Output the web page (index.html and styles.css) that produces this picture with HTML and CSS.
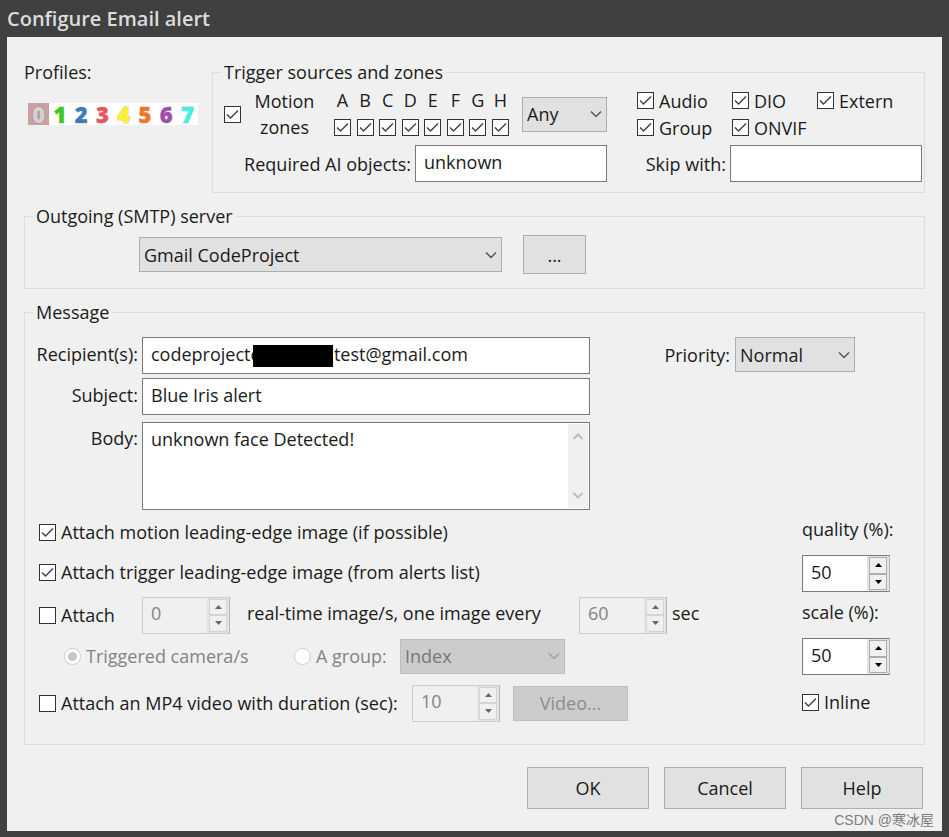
FILE: index.html
```html
<!DOCTYPE html>
<html lang="en">
<head>
    <meta charset="UTF-8">
    <meta name="viewport" content="width=device-width, initial-scale=1.0">
    <title>Configure Email alert</title>
    <link rel="stylesheet" href="styles.css">
</head>
<body>
    <h1 class="title-bar">Configure Email alert</h1>

    <form class="dialog">
        <div class="top">
            <div class="profiles">
                <p>Profiles:</p>
                <div class="profile-list">
                    <button type="button" class="profile p0">0</button>
                    <button type="button" class="profile p1">1</button>
                    <button type="button" class="profile p2">2</button>
                    <button type="button" class="profile p3">3</button>
                    <button type="button" class="profile p4">4</button>
                    <button type="button" class="profile p5">5</button>
                    <button type="button" class="profile p6">6</button>
                    <button type="button" class="profile p7">7</button>
                </div>
            </div>

            <fieldset class="group triggers">
                <legend>Trigger sources and zones</legend>
                <div class="trigger-row">
                    <input type="checkbox" id="motion" checked>
                    <label for="motion" class="motion-label">Motion zones</label>
                    <div class="zones">
                        <label>A<input type="checkbox" checked></label>
                        <label>B<input type="checkbox" checked></label>
                        <label>C<input type="checkbox" checked></label>
                        <label>D<input type="checkbox" checked></label>
                        <label>E<input type="checkbox" checked></label>
                        <label>F<input type="checkbox" checked></label>
                        <label>G<input type="checkbox" checked></label>
                        <label>H<input type="checkbox" checked></label>
                    </div>
                    <select class="zone-mode" aria-label="Zone mode">
                        <option>Any</option>
                    </select>
                    <div class="sources">
                        <label class="check"><input type="checkbox" checked>Audio</label>
                        <label class="check"><input type="checkbox" checked>DIO</label>
                        <label class="check"><input type="checkbox" checked>Extern</label>
                        <label class="check"><input type="checkbox" checked>Group</label>
                        <label class="check"><input type="checkbox" checked>ONVIF</label>
                    </div>
                </div>
                <div class="ai-row">
                    <label for="required" class="required-label">Required AI objects:</label>
                    <input type="text" id="required" value="unknown">
                    <label for="skip" class="skip-label">Skip with:</label>
                    <input type="text" id="skip">
                </div>
            </fieldset>
        </div>

        <fieldset class="group server">
            <legend>Outgoing (SMTP) server</legend>
            <div class="server-row">
                <select class="server-select" aria-label="Server">
                    <option>Gmail CodeProject</option>
                </select>
                <button type="button" class="btn more">...</button>
            </div>
        </fieldset>

        <fieldset class="group message">
            <legend>Message</legend>
            <div class="mail">
                <div class="mail-fields">
                    <label for="recipient">Recipient(s):</label>
                    <div class="recipient">
                        <input type="text" id="recipient" value="codeprojectc&nbsp;&nbsp;&nbsp;&nbsp;&nbsp;&nbsp;&nbsp;&nbsp;&nbsp;&nbsp;&nbsp;&nbsp;&nbsp;&nbsp;&nbsp;&nbsp;test@gmail.com">
                        <span class="redacted"></span>
                    </div>
                    <label for="subject">Subject:</label>
                    <input type="text" id="subject" value="Blue Iris alert">
                    <label for="body" class="body-label">Body:</label>
                    <div class="body-box">
                        <textarea id="body">unknown face Detected!</textarea>
                        <div class="scrollbar">
                            <svg width="12" height="10" viewBox="0 0 12 10"><path d="M1.5 8 6 3.5 10.5 8"/></svg>
                            <svg width="12" height="10" viewBox="0 0 12 10"><path d="M1.5 2 6 6.5 10.5 2"/></svg>
                        </div>
                    </div>
                </div>
                <div class="priority">
                    <label for="priority">Priority:</label>
                    <select id="priority">
                        <option>Normal</option>
                    </select>
                </div>
            </div>

            <div class="attach">
                <div class="attach-options">
                    <div class="line">
                        <label class="check"><input type="checkbox" checked>Attach motion leading-edge image (if possible)</label>
                    </div>
                    <div class="line">
                        <label class="check"><input type="checkbox" checked>Attach trigger leading-edge image (from alerts list)</label>
                    </div>
                    <div class="line realtime">
                        <label class="check attach-count"><input type="checkbox">Attach</label>
                        <div class="spinner disabled">
                            <input type="number" value="0" id="count" disabled>
                            <div class="arrows">
                                <button type="button" disabled aria-label="Up"></button>
                                <button type="button" disabled aria-label="Down"></button>
                            </div>
                        </div>
                        <label for="count" class="every">real-time image/s, one image every</label>
                        <div class="spinner disabled">
                            <input type="number" value="60" id="interval" disabled>
                            <div class="arrows">
                                <button type="button" disabled aria-label="Up"></button>
                                <button type="button" disabled aria-label="Down"></button>
                            </div>
                        </div>
                        <label for="interval" class="sec">sec</label>
                    </div>
                    <div class="line cameras">
                        <label class="check triggered"><input type="radio" name="cameras" checked disabled>Triggered camera/s</label>
                        <label class="check by-group"><input type="radio" name="cameras" disabled>A group:</label>
                        <select class="group-select" aria-label="Group" disabled>
                            <option>Index</option>
                        </select>
                    </div>
                    <div class="line video">
                        <label class="check with-video"><input type="checkbox">Attach an MP4 video with duration (sec):</label>
                        <div class="spinner disabled">
                            <input type="number" value="10" aria-label="Duration" disabled>
                            <div class="arrows">
                                <button type="button" disabled aria-label="Up"></button>
                                <button type="button" disabled aria-label="Down"></button>
                            </div>
                        </div>
                        <button type="button" class="btn video-btn" disabled>Video...</button>
                    </div>
                </div>

                <div class="image-options">
                    <label for="quality">quality (%):</label>
                    <div class="spinner">
                        <input type="number" value="50" id="quality">
                        <div class="arrows">
                            <button type="button" aria-label="Up"></button>
                            <button type="button" aria-label="Down"></button>
                        </div>
                    </div>
                    <label for="scale">scale (%):</label>
                    <div class="spinner">
                        <input type="number" value="50" id="scale">
                        <div class="arrows">
                            <button type="button" aria-label="Up"></button>
                            <button type="button" aria-label="Down"></button>
                        </div>
                    </div>
                    <label class="check inline"><input type="checkbox" checked>Inline</label>
                </div>
            </div>
        </fieldset>

        <div class="actions">
            <button type="button" class="btn">OK</button>
            <button type="button" class="btn">Cancel</button>
            <button type="button" class="btn">Help</button>
        </div>
    </form>

    <span class="watermark">CSDN @寒冰屋</span>
</body>
</html>
```
FILE: styles.css
```css
* {
    margin: 0;
    padding: 0;
    box-sizing: border-box;
}

body {
    position: relative;
    background-color: #404040;
    color: #1a1a1a;
    font-family: 'Open Sans', 'Noto Sans', sans-serif;
    font-size: 18px;
    line-height: 24px;
    padding: 0 7px 6px;
}

input, select, textarea, button {
    font: inherit;
    color: inherit;
    border-radius: 0;
    outline: none;
}

label {
    white-space: nowrap;
}

.title-bar {
    color: #dcdcdc;
    font-size: 20px;
    font-weight: 600;
    line-height: 37px;
}

.dialog {
    background-color: #f0f0f0;
    padding: 23px 17px 22px;
}

/* Group boxes */
.group {
    border: 1px solid #dcdcdc;
    min-width: 0;
    padding: 0 2px 0 8px;
}

.group legend {
    padding: 0 3px;
    line-height: 24px;
}

/* Text boxes */
input[type="text"] {
    background-color: #fff;
    border: 1px solid #7a7a7a;
    display: block;
    height: 37px;
    min-width: 0;
    padding: 0 8px 4px;
    width: 100%;
}

/* Drop-downs */
select {
    appearance: none;
    background: #e1e1e1 url("data:image/svg+xml,%3Csvg xmlns='http://www.w3.org/2000/svg' width='12' height='8'%3E%3Cpath d='M1 1.500 6 6.500 11 1.500' fill='none' stroke='%23555' stroke-width='1.500'/%3E%3C/svg%3E") no-repeat right 4px center;
    border: 1px solid #adadad;
    height: 35px;
    padding: 0 20px 0 4px;
}

select:disabled {
    background-color: #ccc;
    background-image: url("data:image/svg+xml,%3Csvg xmlns='http://www.w3.org/2000/svg' width='12' height='8'%3E%3Cpath d='M1 1.500 6 6.500 11 1.500' fill='none' stroke='%23a0a0a0' stroke-width='1.500'/%3E%3C/svg%3E");
    border-color: #bfbfbf;
    color: #787878;
    opacity: 1;
}

/* Check boxes and radios */
input[type="checkbox"],
input[type="radio"] {
    appearance: none;
    background: #fff no-repeat center;
    border: 1px solid #333;
    flex: none;
    height: 17px;
    width: 17px;
}

input[type="checkbox"]:checked {
    background-image: url("data:image/svg+xml,%3Csvg xmlns='http://www.w3.org/2000/svg' width='15' height='15'%3E%3Cpath d='M2 7.500 5.500 11 13 3.500' fill='none' stroke='%23444' stroke-width='1.500'/%3E%3C/svg%3E");
}

input[type="radio"] {
    border-color: #ccc;
    border-radius: 50%;
}

input[type="radio"]:checked {
    background-image: radial-gradient(circle, #c6c6c6 4px, #fff 5px);
}

.check {
    display: flex;
    align-items: center;
    gap: 5px;
}

/* Buttons */
.btn {
    background-color: #e1e1e1;
    border: 1px solid #adadad;
}

.btn:disabled {
    background-color: #ccc;
    border-color: #bfbfbf;
    color: #8c8c8c;
}

/* Number boxes */
.spinner {
    background-color: #fff;
    border: 1px solid #7a7a7a;
    border-right-color: #b4b4bc;
    display: flex;
    flex: none;
    height: 37px;
    width: 88px;
}

.spinner input {
    appearance: textfield;
    background: none;
    border: none;
    flex: 1;
    min-width: 0;
    padding: 0 0 4px 8px;
}

.spinner input::-webkit-inner-spin-button {
    display: none;
}

.arrows {
    background-color: #e3e3e8;
    display: flex;
    flex-direction: column;
    padding: 1px 2px;
    width: 22px;
}

.arrows button {
    background: #f0f0f0 no-repeat center;
    background-image: url("data:image/svg+xml,%3Csvg xmlns='http://www.w3.org/2000/svg' width='7' height='4'%3E%3Cpath d='M0 4 3.500 0 7 4z'/%3E%3C/svg%3E");
    border: 1px solid #acacac;
    flex: 1;
}

.arrows button + button {
    background-image: url("data:image/svg+xml,%3Csvg xmlns='http://www.w3.org/2000/svg' width='7' height='4'%3E%3Cpath d='M0 0 3.500 4 7 0z'/%3E%3C/svg%3E");
}

.spinner.disabled {
    background-color: #f0f0f0;
    border-color: #ccc;
    border-right-color: #b4b4bc;
    color: #838383;
}

.disabled .arrows button {
    background-image: url("data:image/svg+xml,%3Csvg xmlns='http://www.w3.org/2000/svg' width='7' height='4'%3E%3Cpath d='M0 4 3.500 0 7 4z' fill='%23666'/%3E%3C/svg%3E");
    border-color: #d4d4d4;
}

.disabled .arrows button + button {
    background-image: url("data:image/svg+xml,%3Csvg xmlns='http://www.w3.org/2000/svg' width='7' height='4'%3E%3Cpath d='M0 0 3.500 4 7 0z' fill='%23666'/%3E%3C/svg%3E");
}

/* Profiles */
.top {
    display: flex;
}

.profiles {
    flex: none;
    width: 188px;
}

.profile-list {
    background-color: #fff;
    display: flex;
    height: 22px;
    margin: 19px 14px 0 4px;
}

.profile {
    background: none;
    border: none;
    flex: 1;
    font-family: 'Noto Sans', sans-serif;
    font-size: 22px;
    font-weight: 900;
    line-height: 22px;
    -webkit-text-stroke: 1px rgba(70, 70, 70, 0.3);
    paint-order: stroke fill;
}

.p0 { background-color: #cba0a2; color: #d2d2d2; }
.p1 { color: #3ccb1c; }
.p2 { color: #3a7cbc; }
.p3 { color: #f05058; }
.p4 { color: #fff02c; }
.p5 { color: #f47420; }
.p6 { color: #a04cb0; }
.p7 { color: #3cf4e4; }

/* Trigger sources */
.triggers {
    flex: 1;
    padding-bottom: 10px;
}

.trigger-row {
    display: flex;
    align-items: center;
    padding: 3px 0 4px 3px;
}

.motion-label {
    line-height: 26px;
    margin-right: 6px;
    padding: 0 12px;
    text-align: center;
    white-space: normal;
    width: 87px;
}

.zones {
    display: flex;
    justify-content: space-between;
    padding-bottom: 4px;
    width: 175px;
}

.zones label {
    display: flex;
    flex-direction: column;
    align-items: center;
    gap: 7px;
    width: 17px;
}

.zone-mode {
    margin: 0 30px 0 13px;
    width: 85px;
}

.sources {
    display: grid;
    grid-template-columns: 95px 85px auto;
    grid-auto-rows: 27px;
}

.ai-row {
    display: flex;
    align-items: center;
    gap: 4px;
}

.ai-row input {
    flex: 1;
}

.required-label {
    text-align: right;
    width: 190px;
}

.skip-label {
    text-align: right;
    width: 115px;
}

/* Server */
.server {
    margin-top: 11px;
    padding-bottom: 14px;
}

.server-row {
    display: flex;
    align-items: center;
    gap: 21px;
    padding: 7px 0 0 106px;
}

.server-select {
    flex: 0 1 363px;
}

.more {
    height: 39px;
    width: 63px;
}

/* Message */
.message {
    margin-top: 11px;
    padding-bottom: 22px;
}

.mail {
    display: flex;
    justify-content: space-between;
    padding-top: 13px;
}

.mail-fields {
    display: grid;
    grid-template-columns: 105px 1fr;
    align-items: center;
    gap: 4px;
    flex: 0 1 557px;
}

.mail-fields label {
    padding-bottom: 4px;
    text-align: right;
}

.mail-fields .body-label {
    align-self: start;
    padding-top: 7px;
}

.recipient {
    position: relative;
}

.redacted {
    background-color: #000;
    height: 22px;
    left: 111px;
    position: absolute;
    top: 8px;
    width: 80px;
}

.body-box {
    background-color: #fff;
    border: 1px solid #7a7a7a;
    display: flex;
    height: 88px;
    margin-top: 3px;
    padding: 1px;
}

.body-box textarea {
    background: none;
    border: none;
    flex: 1;
    padding: 3px 7px;
    resize: none;
}

.scrollbar {
    background-color: #f0f0f0;
    display: flex;
    flex-direction: column;
    align-items: center;
    justify-content: space-between;
    padding: 7px 0;
    width: 20px;
}

.scrollbar path {
    fill: none;
    stroke: #bdbdbd;
    stroke-width: 2;
}

.priority {
    display: flex;
    align-items: center;
    align-self: start;
    gap: 5px;
    margin-right: 67px;
}

.priority select {
    width: 120px;
}

.attach {
    display: flex;
    justify-content: space-between;
    padding: 2px 0 0 6px;
}

.line {
    display: flex;
    align-items: center;
    height: 40px;
}

.realtime {
    height: 46px;
}

.attach-count {
    width: 103px;
}

.every {
    padding: 0 0 4px 17px;
    width: 349px;
}

.sec {
    padding: 0 0 4px 5px;
}

.cameras {
    color: #838383;
    height: 36px;
    padding-left: 25px;
}

.triggered {
    width: 230px;
}

.by-group {
    width: 106px;
}

.group-select {
    width: 165px;
}

.video {
    height: 38px;
    margin-top: 10px;
}

.with-video {
    width: 373px;
}

.video-btn {
    height: 35px;
    margin-left: 13px;
    width: 115px;
}

.image-options {
    width: 120px;
}

.image-options label {
    display: block;
    line-height: 35px;
}

.image-options .spinner {
    margin: 8px 0 3px;
}

.image-options .inline {
    display: flex;
    margin-top: 10px;
}

/* Dialog buttons */
.actions {
    display: flex;
    justify-content: flex-end;
    gap: 15px;
    padding: 22px 2px 0 0;
}

.actions .btn {
    height: 42px;
    width: 122px;
}

.watermark {
    bottom: 6px;
    color: #7c7c7c;
    font-family: 'Liberation Sans', 'Noto Sans CJK SC', sans-serif;
    font-size: 14px;
    line-height: 22px;
    position: absolute;
    right: 15px;
}
```
